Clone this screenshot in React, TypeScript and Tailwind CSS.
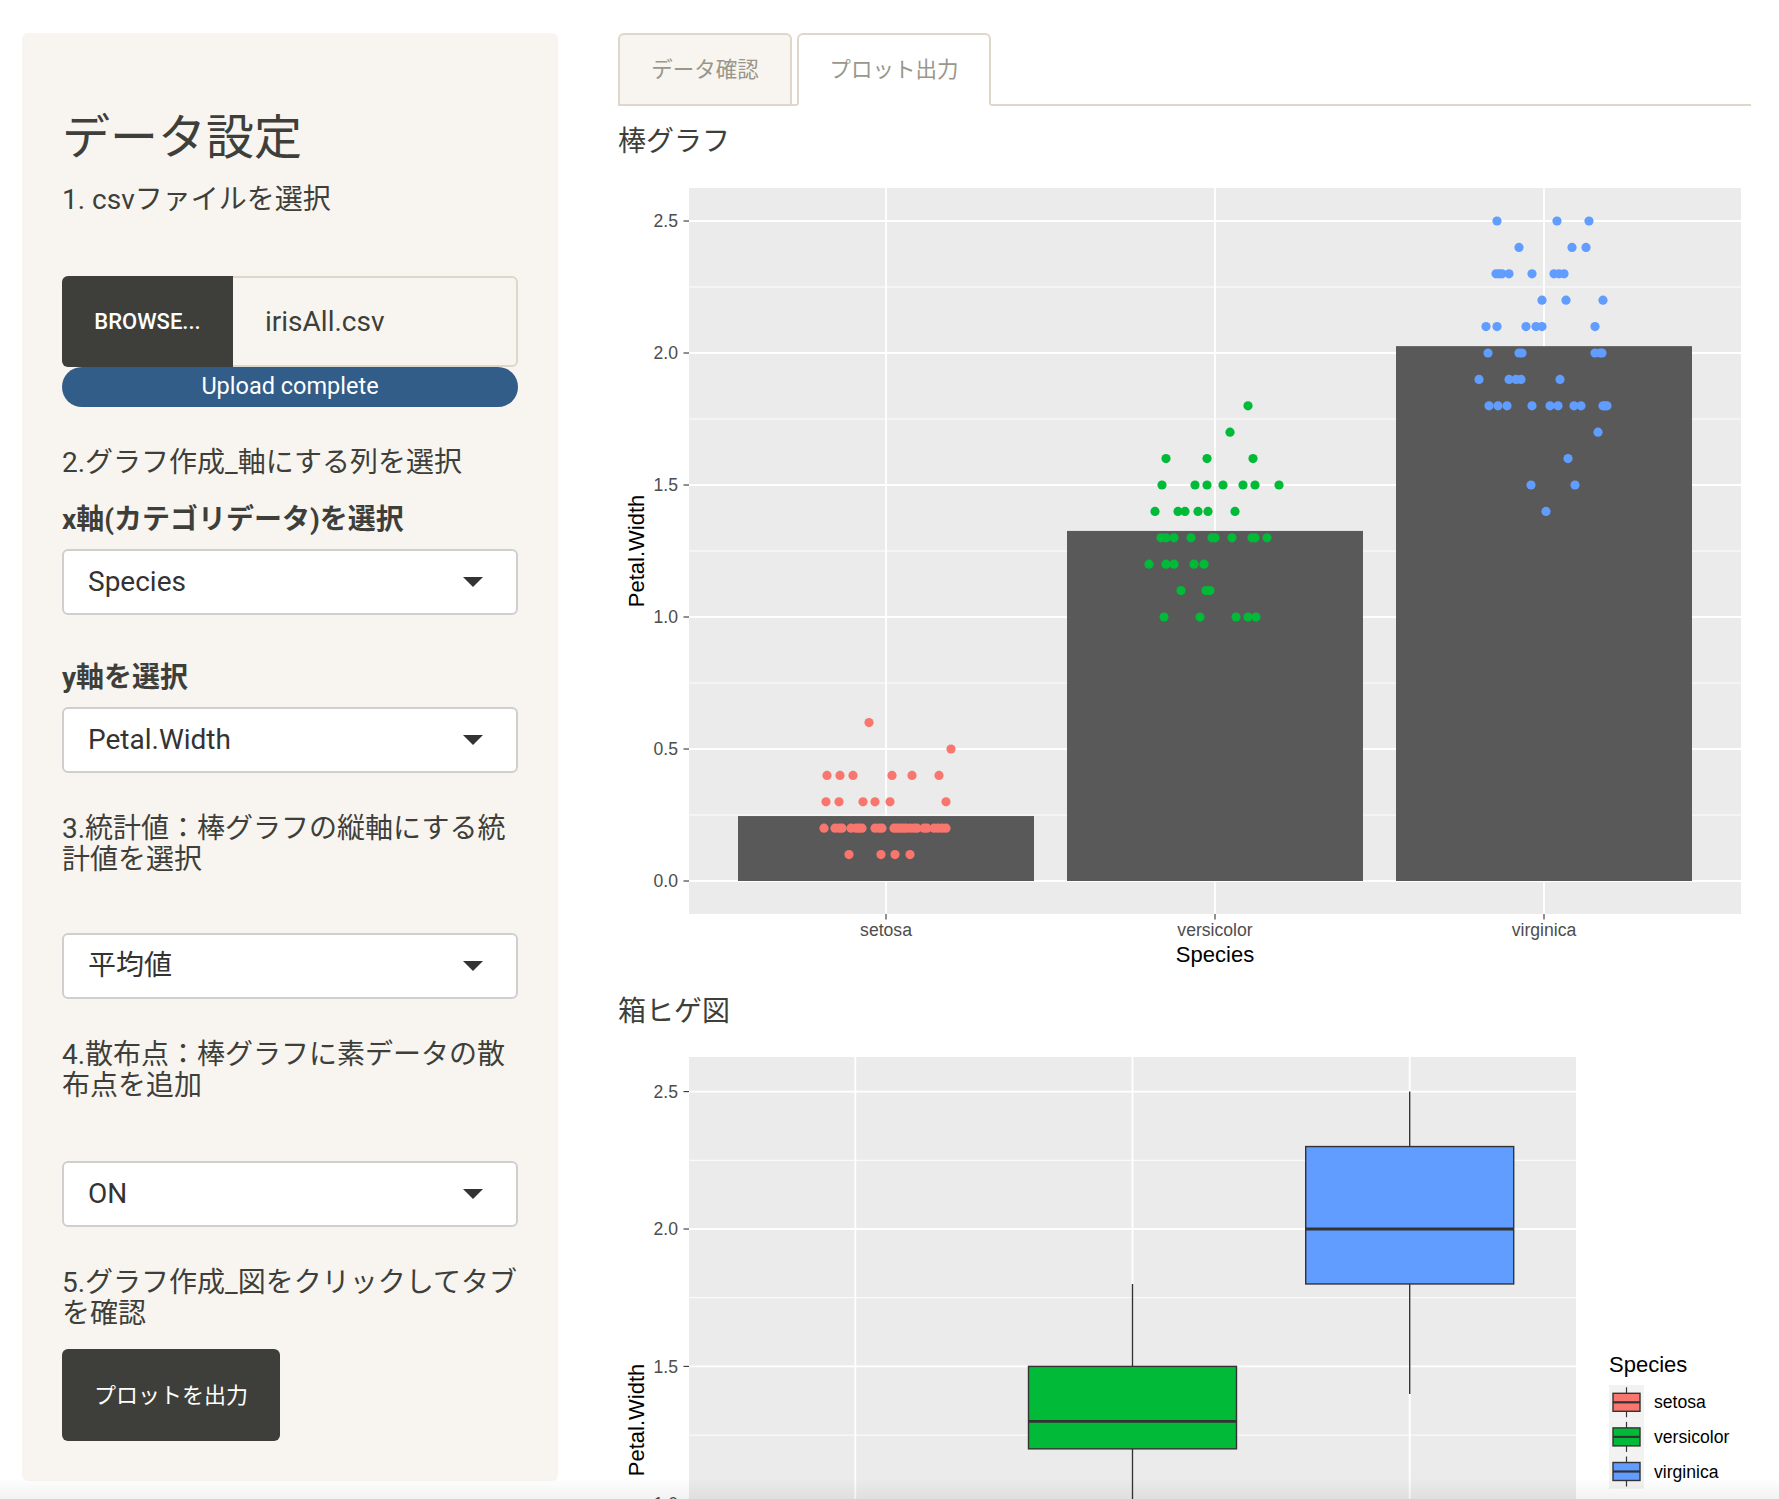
import React from 'react'

// ggplot-ish colours
const SPECIES = [
    { name: 'setosa', color: '#F8766D' },
    { name: 'versicolor', color: '#00BA38' },
    { name: 'virginica', color: '#619CFF' },
]

// bar chart scale (page px)
const barY = (v: number) => 880 - 264 * v
const barX = [886, 1215, 1544]
const means = [0.246, 1.326, 2.026]

// jittered points: [species, value, x offsets]
const dots: [number, number, number[]][] = [
    [0, 0.6, [-17]],
    [0, 0.5, [65]],
    [0, 0.4, [-59, -46, -33, 6, 26, 53]],
    [0, 0.3, [-60, -47, -23, -11, 4, 60]],
    [0, 0.2, [-62, -51, -47, -44, -35, -30, -27, -24, -11, -7, -4, 8, 11, 14, 17, 20, 24, 28, 31, 38, 41, 48, 52, 56, 60]],
    [0, 0.1, [-37, -5, 9, 24]],
    [1, 1.8, [33]],
    [1, 1.7, [15]],
    [1, 1.6, [-49, -8, 38]],
    [1, 1.5, [-53, -20, -8, 8, 28, 40, 64]],
    [1, 1.4, [-60, -37, -30, -17, -7, 20]],
    [1, 1.3, [-54, -49, -41, -24, -3, 0, 17, 37, 40, 52]],
    [1, 1.2, [-66, -49, -41, -21, -11]],
    [1, 1.1, [-34, -9, -5]],
    [1, 1.0, [-51, -15, 21, 33, 41]],
    [2, 2.5, [-47, 13, 45]],
    [2, 2.4, [-25, 28, 42]],
    [2, 2.3, [-48, -45, -42, -35, -12, 10, 15, 20]],
    [2, 2.2, [-2, 22, 59]],
    [2, 2.1, [-58, -47, -18, -8, -2, 51]],
    [2, 2.0, [-56, -25, -22, 51, 56, 58]],
    [2, 1.9, [-65, -35, -28, -23, 16]],
    [2, 1.8, [-55, -46, -37, -12, 6, 14, 30, 37, 59, 61, 63]],
    [2, 1.7, [54]],
    [2, 1.6, [24]],
    [2, 1.5, [-13, 31]],
    [2, 1.4, [2]],
]

// box plot scale
const boxY = (v: number) => 1229 - (v - 2) * 274.8
const boxX = [855.3, 1132.5, 1409.7]
const boxStats = [
    { lo: 0.1, q1: 0.2, med: 0.2, q3: 0.3, hi: 0.4, out: [0.5, 0.6] },
    { lo: 1.0, q1: 1.2, med: 1.3, q3: 1.5, hi: 1.8, out: [] as number[] },
    { lo: 1.4, q1: 1.8, med: 2.0, q3: 2.3, hi: 2.5, out: [] as number[] },
]

const AXIS_FONT = 'Liberation Sans, Arial, sans-serif'

function BarPlot() {
    const majors = [0, 0.5, 1, 1.5, 2, 2.5]
    const minors = [0.25, 0.75, 1.25, 1.75, 2.25]
    return (
        <svg className="block mt-[4px]" width={1133} height={825} viewBox="618 160 1133 825">
            <rect x={689} y={187} width={1052} height={726} fill="#EBEBEB" />
            {minors.map(v => (
                <line key={v} x1={689} x2={1741} y1={barY(v)} y2={barY(v)} stroke="#fff" strokeWidth={0.9} />
            ))}
            {majors.map(v => (
                <line key={v} x1={689} x2={1741} y1={barY(v)} y2={barY(v)} stroke="#fff" strokeWidth={1.8} />
            ))}
            {barX.map(x => (
                <line key={x} x1={x} x2={x} y1={187} y2={913} stroke="#fff" strokeWidth={1.8} />
            ))}
            {barX.map((x, i) => (
                <rect key={x} x={x - 148} y={barY(means[i])} width={296} height={barY(0) - barY(means[i])} fill="#595959" />
            ))}
            {dots.map(([s, v, offs]) =>
                offs.map((o, j) => (
                    <circle key={`${s}-${v}-${j}`} cx={barX[s] + o} cy={barY(v)} r={4.6} fill={SPECIES[s].color} />
                ))
            )}
            {/* y axis */}
            {majors.map(v => (
                <g key={v}>
                    <line x1={683.5} x2={689} y1={barY(v)} y2={barY(v)} stroke="#333" strokeWidth={1.1} />
                    <text x={678} y={barY(v) + 6.3} textAnchor="end" fontSize={17.6} fill="#4D4D4D" fontFamily={AXIS_FONT}>
                        {v.toFixed(1)}
                    </text>
                </g>
            ))}
            {/* x axis */}
            {barX.map((x, i) => (
                <g key={x}>
                    <line x1={x} x2={x} y1={913} y2={918.5} stroke="#333" strokeWidth={1.1} />
                    <text x={x} y={935} textAnchor="middle" fontSize={17.6} fill="#4D4D4D" fontFamily={AXIS_FONT}>
                        {SPECIES[i].name}
                    </text>
                </g>
            ))}
            <text x={1215} y={961} textAnchor="middle" fontSize={22} fill="#000" fontFamily={AXIS_FONT}>Species</text>
            <text x={644} y={550} textAnchor="middle" fontSize={22} fill="#000" fontFamily={AXIS_FONT} transform="rotate(-90 644 550)">
                Petal.Width
            </text>
        </svg>
    )
}

function BoxPlot() {
    const majors = [0.5, 1, 1.5, 2, 2.5]
    const minors = [0.25, 0.75, 1.25, 1.75, 2.25]
    return (
        <svg className="block mt-[3px]" width={1133} height={800} viewBox="618 1030 1133 800">
            <rect x={689} y={1057} width={887} height={727} fill="#EBEBEB" />
            {minors.map(v => (
                <line key={v} x1={689} x2={1576} y1={boxY(v)} y2={boxY(v)} stroke="#fff" strokeWidth={0.9} />
            ))}
            {majors.map(v => (
                <line key={v} x1={689} x2={1576} y1={boxY(v)} y2={boxY(v)} stroke="#fff" strokeWidth={1.8} />
            ))}
            {boxX.map(x => (
                <line key={x} x1={x} x2={x} y1={1057} y2={1784} stroke="#fff" strokeWidth={1.8} />
            ))}
            {boxX.map((x, i) => {
                const s = boxStats[i]
                return (
                    <g key={x}>
                        <line x1={x} x2={x} y1={boxY(s.hi)} y2={boxY(s.q3)} stroke="#333" strokeWidth={1.4} />
                        <line x1={x} x2={x} y1={boxY(s.q1)} y2={boxY(s.lo)} stroke="#333" strokeWidth={1.4} />
                        <rect x={x - 104} y={boxY(s.q3)} width={208} height={boxY(s.q1) - boxY(s.q3)} fill={SPECIES[i].color} stroke="#333" strokeWidth={1.4} />
                        <line x1={x - 104} x2={x + 104} y1={boxY(s.med)} y2={boxY(s.med)} stroke="#333" strokeWidth={2.8} />
                        {s.out.map(o => (
                            <circle key={o} cx={x} cy={boxY(o)} r={3} fill="#333" />
                        ))}
                    </g>
                )
            })}
            {majors.map(v => (
                <g key={v}>
                    <line x1={683.5} x2={689} y1={boxY(v)} y2={boxY(v)} stroke="#333" strokeWidth={1.1} />
                    <text x={678} y={boxY(v) + 6.3} textAnchor="end" fontSize={17.6} fill="#4D4D4D" fontFamily={AXIS_FONT}>
                        {v.toFixed(1)}
                    </text>
                </g>
            ))}
            <text x={644} y={1420} textAnchor="middle" fontSize={22} fill="#000" fontFamily={AXIS_FONT} transform="rotate(-90 644 1420)">
                Petal.Width
            </text>
            {/* legend */}
            <text x={1609} y={1371.5} fontSize={22} fill="#000" fontFamily={AXIS_FONT}>Species</text>
            {SPECIES.map((sp, i) => {
                const top = 1385 + i * 34.6
                const cy = top + 17.3
                return (
                    <g key={sp.name}>
                        <rect x={1609} y={top} width={35} height={34.6} fill="#F2F2F2" />
                        <line x1={1626.5} x2={1626.5} y1={cy - 15} y2={cy + 15} stroke="#333" strokeWidth={1.2} />
                        <rect x={1613} y={cy - 9} width={27} height={18} fill={sp.color} stroke="#333" strokeWidth={1.4} />
                        <line x1={1613} x2={1640} y1={cy} y2={cy} stroke="#333" strokeWidth={2.2} />
                        <text x={1654} y={cy + 6} fontSize={17.6} fill="#000" fontFamily={AXIS_FONT}>{sp.name}</text>
                    </g>
                )
            })}
        </svg>
    )
}

function SelectBox({ value, className }: { value: string; className: string }) {
    return (
        <div className={`flex h-[66px] items-center justify-between rounded-[6px] border-2 border-[#cfcfcf] bg-white pl-[24px] pr-[33px] text-[28px] text-[#333] ${className}`}>
            <span>{value}</span>
            <svg width="20" height="10" viewBox="0 0 20 10">
                <polygon points="0,0 20,0 10,10" fill="#333" />
            </svg>
        </div>
    )
}

export default function App() {
    return (
        <div className="relative h-[1499px] overflow-hidden bg-white font-[Roboto,'Noto_Sans_CJK_JP',sans-serif]">
            <div className="flex items-start gap-[60px] pl-[22px] pt-[33px]">
                {/* Sidebar */}
                <div className="w-[536px] shrink-0 rounded-[6px] bg-[#f8f5f0] px-[40px] pt-[79px] pb-[40px] text-[#3e3f3a]">
                    <h2 className="text-[48px] leading-[52px]">データ設定</h2>
                    <p className="mt-[20px] text-[28px] leading-[31px]">1. csvファイルを選択</p>

                    <div className="mt-[61px] flex h-[91px]">
                        <div className="flex w-[171px] items-center justify-center rounded-l-[6px] bg-[#3e3f3a] text-[22px] font-medium text-white">
                            BROWSE...
                        </div>
                        <div className="flex flex-1 items-center rounded-r-[6px] border-2 border-l-0 border-[#dfd7ca] bg-[#f8f5f0] pl-[32px] text-[28px]">
                            irisAll.csv
                        </div>
                    </div>
                    <div className="flex h-[40px] items-center justify-center rounded-full bg-[#325d88] text-[23.5px] text-white">
                        Upload complete
                    </div>

                    <p className="mt-[40px] text-[28px] leading-[31px]">2.グラフ作成_軸にする列を選択</p>
                    <p className="mt-[26px] text-[28px] font-bold leading-[31px]">x軸(カテゴリデータ)を選択</p>
                    <SelectBox value="Species" className="mt-[14px]" />

                    <p className="mt-[47px] text-[28px] font-bold leading-[31px]">y軸を選択</p>
                    <SelectBox value="Petal.Width" className="mt-[14px]" />

                    <p className="mt-[40px] text-[28px] leading-[31px]">
                        3.統計値：棒グラフの縦軸にする統<br />計値を選択
                    </p>
                    <SelectBox value="平均値" className="mt-[58px]" />

                    <p className="mt-[40px] text-[28px] leading-[31px]">
                        4.散布点：棒グラフに素データの散<br />布点を追加
                    </p>
                    <SelectBox value="ON" className="mt-[60px]" />

                    <p className="mt-[40px] text-[28px] leading-[31px]">
                        5.グラフ作成_図をクリックしてタブ<br />を確認
                    </p>
                    <button className="mt-[20px] h-[92px] rounded-[6px] bg-[#3e3f3a] px-[32px] text-[22px] text-white">
                        プロットを出力
                    </button>
                </div>

                {/* Main panel */}
                <div className="w-[1133px] shrink-0">
                    <div className="flex h-[73px] gap-[5px] border-b-2 border-[#dfd7ca]">
                        <div className="-mb-[2px] flex w-[174px] items-center justify-center rounded-t-[6px] border-2 border-[#dfd7ca] bg-[#f8f5f0] pt-[1px] text-[21.5px] text-[#98978b]">
                            データ確認
                        </div>
                        <div className="-mb-[2px] flex w-[194px] items-center justify-center rounded-t-[6px] border-2 border-[#dfd7ca] border-b-white bg-white pt-[1px] text-[21.5px] text-[#98978b]">
                            プロット出力
                        </div>
                    </div>

                    <h4 className="mt-[20px] text-[28px] leading-[31px] text-[#3e3f3a]">棒グラフ</h4>
                    <BarPlot />

                    <h4 className="mt-[10px] text-[28px] leading-[31px] text-[#3e3f3a]">箱ヒゲ図</h4>
                    <BoxPlot />
                </div>
            </div>

            {/* bottom fade of the window */}
            <div className="pointer-events-none absolute inset-x-0 bottom-0 h-[22px] bg-linear-to-b from-transparent to-black/[0.05]" />
        </div>
    )
}
